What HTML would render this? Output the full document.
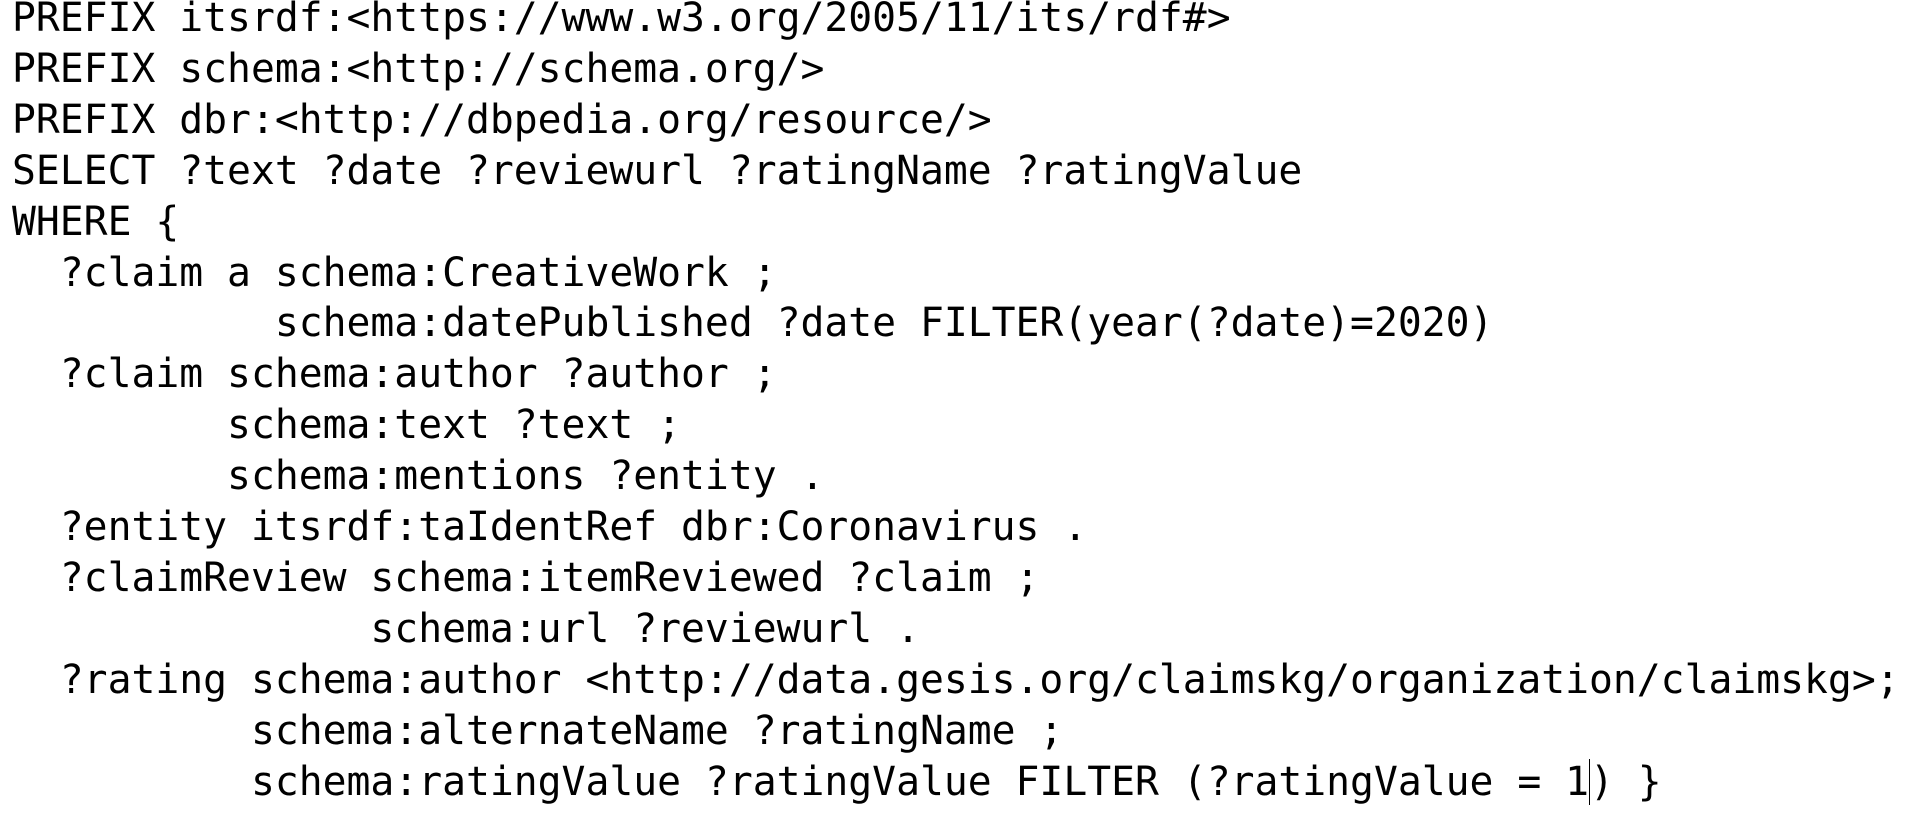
<!DOCTYPE html>
<html><head><meta charset="utf-8"><style>
html,body{margin:0;padding:0;background:#fff;width:1915px;height:815px;overflow:hidden}
pre{position:absolute;left:12px;top:-7px;margin:0;font-family:"DejaVu Sans Mono","Liberation Mono",monospace;font-size:39.7px;line-height:50.9px;color:#000;letter-spacing:0}
.c{display:inline-block;width:0;border-left:1px solid #000;height:46px;vertical-align:-10px}
</style></head><body>
<pre>PREFIX itsrdf:&lt;https://www.w3.org/2005/11/its/rdf#&gt;
PREFIX schema:&lt;http://schema.org/&gt;
PREFIX dbr:&lt;http://dbpedia.org/resource/&gt;
SELECT ?text ?date ?reviewurl ?ratingName ?ratingValue
WHERE {
  ?claim a schema:CreativeWork ;
           schema:datePublished ?date FILTER(year(?date)=2020)
  ?claim schema:author ?author ;
         schema:text ?text ;
         schema:mentions ?entity .
  ?entity itsrdf:taIdentRef dbr:Coronavirus .
  ?claimReview schema:itemReviewed ?claim ;
               schema:url ?reviewurl .
  ?rating schema:author &lt;http://data.gesis.org/claimskg/organization/claimskg&gt;;
          schema:alternateName ?ratingName ;
          schema:ratingValue ?ratingValue FILTER (?ratingValue = 1<span class="c"></span>) }</pre>
</body></html>
